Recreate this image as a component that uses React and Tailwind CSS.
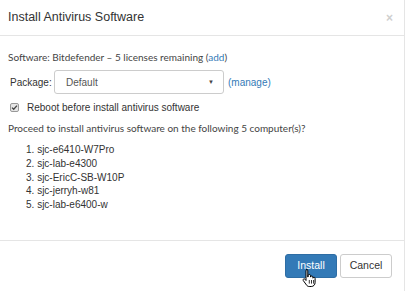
import React from 'react';

const computers = [
  'sjc-e6410-W7Pro',
  'sjc-lab-e4300',
  'sjc-EricC-SB-W10P',
  'sjc-jerryh-w81',
  'sjc-lab-e6400-w',
];

function HandCursor() {
  return (
    <svg width="14" height="20" viewBox="0 0 14 20" className="absolute left-[302px] top-[268px]">
      <path
        d="M4.5 1.5c.8 0 1.3.6 1.3 1.3v6.2l.3-.1V7.6c0-.7.6-1.2 1.2-1.2s1.2.5 1.2 1.2v1.5c0-.7.6-1.1 1.2-1.1s1.2.5 1.2 1.2v1c0-.6.5-1 1.1-1 .6 0 1.1.5 1.1 1.1v4.2c0 2.3-1.6 4-3.8 4H7.2c-1.2 0-2-.5-2.7-1.5L1.3 12.6c-.4-.6-.2-1.3.3-1.6.5-.3 1.1-.2 1.5.3l.9 1.2V2.8c0-.7.6-1.3 1.3-1.3z"
        fill="#fff"
        stroke="#000"
        strokeWidth="1"
      />
      <path d="M7.3 12v3.6M9.5 12v3.6M11.6 12v3.6" stroke="#000" strokeWidth="0.8" />
    </svg>
  );
}

export default function App() {
  return (
    <div className="relative w-[406px] h-[291px] bg-white overflow-hidden font-['Liberation_Sans',Arial,sans-serif] text-[#333]">
      <div className="w-[405px] h-full border-r border-[#e5e5e5] flex flex-col">
        <div className="h-[36px] flex items-center justify-between pl-[8px] pr-[11px] border-b border-[#e5e5e5]">
          <h1 className="text-[12.5px] leading-none text-[#333]">Install Antivirus Software</h1>
          <span className="text-[12px] font-bold text-[#cfcfcf] leading-none">×</span>
        </div>

        <div className="flex-1 px-[8px] pt-[14px] text-[10px]">
          <div className="font-['Lato',sans-serif] text-[10px] leading-[14px] text-[#444]">
            Software: Bitdefender – 5 licenses remaining (<span className="text-[#337ab7]">add</span>)
          </div>

          <div className="flex items-center mt-[6px] h-[24px]">
            <span className="w-[46px] pl-[2px]">Package:</span>
            <div className="w-[170px] h-[24px] border border-[#ccc] rounded-[3px] flex items-center justify-between pl-[11px] pr-[9px] text-[#555]">
              <span>Default</span>
              <span className="text-[6px] text-[#444]">▼</span>
            </div>
            <span className="ml-[4px] text-[#337ab7]">(manage)</span>
          </div>

          <div className="flex items-center mt-[6px] h-[14px]">
            <span className="w-[9px] h-[9px] ml-[2px] mr-[8px] rounded-[2px] border border-[#999] bg-[#e6e6e6] flex items-center justify-center">
              <svg width="7" height="7" viewBox="0 0 7 7">
                <path d="M1 3.6l1.7 1.7L6 1.6" fill="none" stroke="#444" strokeWidth="1.3" />
              </svg>
            </span>
            <span>Reboot before install antivirus software</span>
          </div>

          <div className="mt-[7px] font-['Lato',sans-serif] text-[10px] leading-[14px] text-[#444]">
            Proceed to install antivirus software on the following 5 computer(s)?
          </div>

          <ol className="mt-[8px] pl-[18px] text-[10px] leading-[13.8px] text-[#333]">
            {computers.map((c, i) => (
              <li key={c}>
                {i + 1}. {c}
              </li>
            ))}
          </ol>
        </div>

        <div className="h-[51px] border-t border-[#e5e5e5] flex items-center justify-end gap-[3px] pr-[12px]">
          <button className="h-[24px] w-[52px] rounded-[3px] bg-[#337ab7] border border-[#2e6da4] text-white text-[10.5px]">
            Install
          </button>
          <button className="h-[24px] w-[52px] rounded-[3px] bg-white border border-[#ccc] text-[#333] text-[10.5px]">
            Cancel
          </button>
        </div>
      </div>
      <HandCursor />
    </div>
  );
}
